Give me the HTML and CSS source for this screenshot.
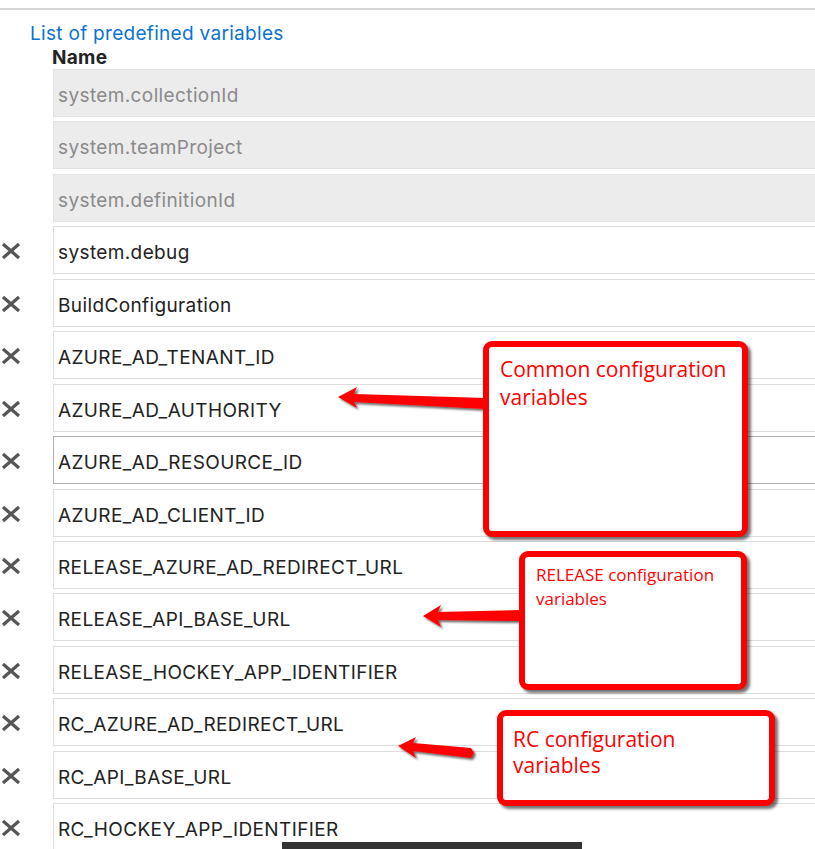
FILE: index.html
```html
<!DOCTYPE html>
<html>
<head>
<meta charset="utf-8">
<link rel="stylesheet" href="styles.css">
</head>
<body>
<div class="page">
  <div class="rule"></div>
  <a class="link" href="#">List of predefined variables</a>
  <div class="col-head">Name</div>
  <div class="rows">
    <div class="row"><span class="icon-slot"></span><div class="field readonly">system.collectionId</div></div>
    <div class="row"><span class="icon-slot"></span><div class="field readonly">system.teamProject</div></div>
    <div class="row"><span class="icon-slot"></span><div class="field readonly">system.definitionId</div></div>
    <div class="row"><span class="icon-slot"><svg class="x" viewBox="0 0 22 20"><path d="M3 3L19 17M19 3L3 17"/></svg></span><div class="field">system.debug</div></div>
    <div class="row"><span class="icon-slot"><svg class="x" viewBox="0 0 22 20"><path d="M3 3L19 17M19 3L3 17"/></svg></span><div class="field">BuildConfiguration</div></div>
    <div class="row"><span class="icon-slot"><svg class="x" viewBox="0 0 22 20"><path d="M3 3L19 17M19 3L3 17"/></svg></span><div class="field">AZURE_AD_TENANT_ID</div></div>
    <div class="row"><span class="icon-slot"><svg class="x" viewBox="0 0 22 20"><path d="M3 3L19 17M19 3L3 17"/></svg></span><div class="field">AZURE_AD_AUTHORITY</div></div>
    <div class="row"><span class="icon-slot"><svg class="x" viewBox="0 0 22 20"><path d="M3 3L19 17M19 3L3 17"/></svg></span><div class="field focused">AZURE_AD_RESOURCE_ID</div></div>
    <div class="row"><span class="icon-slot"><svg class="x" viewBox="0 0 22 20"><path d="M3 3L19 17M19 3L3 17"/></svg></span><div class="field">AZURE_AD_CLIENT_ID</div></div>
    <div class="row"><span class="icon-slot"><svg class="x" viewBox="0 0 22 20"><path d="M3 3L19 17M19 3L3 17"/></svg></span><div class="field">RELEASE_AZURE_AD_REDIRECT_URL</div></div>
    <div class="row"><span class="icon-slot"><svg class="x" viewBox="0 0 22 20"><path d="M3 3L19 17M19 3L3 17"/></svg></span><div class="field">RELEASE_API_BASE_URL</div></div>
    <div class="row"><span class="icon-slot"><svg class="x" viewBox="0 0 22 20"><path d="M3 3L19 17M19 3L3 17"/></svg></span><div class="field">RELEASE_HOCKEY_APP_IDENTIFIER</div></div>
    <div class="row"><span class="icon-slot"><svg class="x" viewBox="0 0 22 20"><path d="M3 3L19 17M19 3L3 17"/></svg></span><div class="field">RC_AZURE_AD_REDIRECT_URL</div></div>
    <div class="row"><span class="icon-slot"><svg class="x" viewBox="0 0 22 20"><path d="M3 3L19 17M19 3L3 17"/></svg></span><div class="field">RC_API_BASE_URL</div></div>
    <div class="row"><span class="icon-slot"><svg class="x" viewBox="0 0 22 20"><path d="M3 3L19 17M19 3L3 17"/></svg></span><div class="field">RC_HOCKEY_APP_IDENTIFIER</div></div>
  </div>

  <svg class="arrows" viewBox="0 0 815 849">
    <defs>
      <filter id="sh" x="-20%" y="-50%" width="140%" height="200%">
        <feDropShadow dx="2" dy="2" stdDeviation="1.2" flood-color="#000" flood-opacity="0.6"/>
      </filter>
    </defs>
    <polygon filter="url(#sh)" points="338,397 357,387 354,394 486,398 486,409 354,402 357,408"/>
    <polygon filter="url(#sh)" points="423,616 441,605 438,612 522,610 522,621 438,620 441,627"/>
    <polygon filter="url(#sh)" points="398,746 416,737 413,743 471,748 474,753 471,758 413,751 416,758"/>
  </svg>

  <div class="callout callout-common">Common configuration<br>variables</div>
  <div class="callout callout-release">RELEASE configuration<br>variables</div>
  <div class="callout callout-rc">RC configuration<br>variables</div>

  <div class="bottom-bar"></div>
</div>
</body>
</html>
```

FILE: styles.css
```css
html, body {
  margin: 0;
  padding: 0;
  background: #ffffff;
}

.page {
  position: relative;
  width: 815px;
  height: 849px;
  overflow: hidden;
  font-family: Inter, "Liberation Sans", sans-serif;
  color: #222222;
}

.rule {
  margin-top: 8px;
  height: 0;
  border-top: 2px solid #d4d4d4;
}

.link {
  display: block;
  margin: 13px 0 0 30px;
  font-size: 19px;
  letter-spacing: 0.3px;
  line-height: 22px;
  color: #0b73d3;
  text-decoration: none;
  width: max-content;
}

.col-head {
  margin: 2px 0 0 52px;
  font-size: 19px;
  letter-spacing: 0.3px;
  line-height: 22px;
  font-weight: 700;
  color: #222222;
}

.rows {
  margin-top: 0;
  display: flex;
  flex-direction: column;
  gap: 4.45px;
}

.row {
  display: flex;
  align-items: center;
  height: 48px;
}

.icon-slot {
  width: 53px;
  flex: 0 0 53px;
  display: flex;
  align-items: center;
}

.x {
  width: 22px;
  height: 20px;
  margin-left: 0;
  margin-top: 2px;
  fill: none;
  stroke: #555555;
  stroke-width: 3.2;
  stroke-linecap: butt;
  filter: blur(0.6px);
}

.field {
  box-sizing: border-box;
  flex: 0 0 820px;
  height: 48px;
  border: 1px solid #dedede;
  background: #ffffff;
  padding: 4px 0 0 4px;
  font-size: 19px;
  letter-spacing: 0.38px;
  line-height: 44px;
  color: #222222;
  white-space: nowrap;
}

.field.readonly {
  background: #ececec;
  border-color: #e2e2e2;
  color: #8a8a8a;
}

.field.focused {
  border-color: #b0b0b0;
}

.arrows {
  position: absolute;
  left: 0;
  top: 0;
  width: 815px;
  height: 849px;
  fill: #ff0000;
}

.callout {
  position: absolute;
  box-sizing: border-box;
  border: 6px solid #ff0000;
  border-radius: 9px;
  background: #ffffff;
  box-shadow: 3px 3px 3px rgba(0, 0, 0, 0.55);
  color: #ff0000;
  font-family: "Open Sans", "Noto Sans", sans-serif;
}

.callout-common {
  left: 483px;
  top: 341px;
  width: 265px;
  height: 196px;
  padding: 8px 0 0 11px;
  font-size: 21px;
  line-height: 28px;
}

.callout-release {
  left: 519px;
  top: 551px;
  width: 228px;
  height: 139px;
  padding: 6px 0 0 11px;
  font-size: 17px;
  line-height: 24px;
}

.callout-rc {
  left: 497px;
  top: 710px;
  width: 278px;
  height: 96px;
  padding: 10px 0 0 10px;
  font-size: 21px;
  line-height: 26px;
}

.bottom-bar {
  position: absolute;
  left: 282px;
  top: 842px;
  width: 300px;
  height: 7px;
  background: #333333;
}
```
